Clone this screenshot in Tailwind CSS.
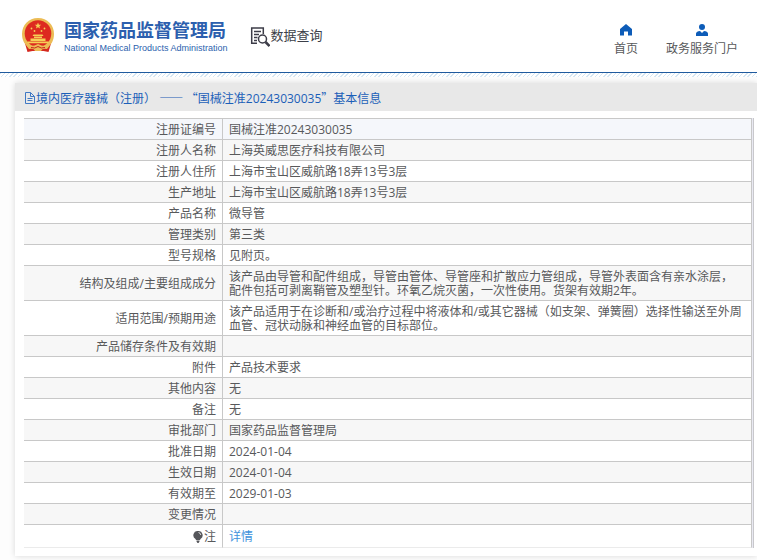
<!DOCTYPE html>
<html lang="zh-CN">
<head>
<meta charset="utf-8">
<title>国家药品监督管理局 数据查询</title>
<script src="https://cdn.jsdelivr.net/npm/@tailwindcss/browser@4"></script>
</head>
<body class="min-h-screen bg-[#fdfdfd] font-['Open_Sans','Noto_Sans_CJK_SC',sans-serif] text-xs text-[#58595b]">
<header class="flex items-start justify-between border-b border-[#1f5a9e] bg-white pt-4 pr-[19px] pb-[15px] pl-5">
  <div class="flex items-center">
    <a href="#" class="flex items-center gap-2" aria-label="国家药品监督管理局">
      <svg class="h-10 w-9" viewBox="0 0 36 40" aria-hidden="true">
        <path d="M4 24L7.500 36l5-1h11l5 1L32 24z" fill="#d5281f"/>
        <path d="M18 2C8.500 2 2 9 2 18c0 6 2.500 10 6 13h20c3.500-3 6-7 6-13C34 9 27.500 2 18 2z" fill="#ecbc55"/>
        <circle cx="18" cy="17.500" r="13.300" fill="#dd2a20"/>
        <path d="M18 6.500l.9 2.200 2.300.1-1.800 1.500.6 2.300-2-1.300-2 1.300.6-2.300-1.800-1.500 2.300-.1z" fill="#f6cf56"/>
        <g fill="#f6cf56"><circle cx="11.500" cy="12.500" r=".9"/><circle cx="14.500" cy="15" r=".9"/><circle cx="21.500" cy="15" r=".9"/><circle cx="24.500" cy="12.500" r=".9"/>
        <path d="M13.500 18.500h9l1 1.500h-11zM14 20.500h8V22h-8zM10.500 22.500h15V25h-15zM7.500 25.500h21v1.700h-21z"/></g>
        <path d="M6 29q6 2.500 12-1 6 3.500 12 1l-3 4q-5-1-6 2h-6q-1-3-6-2z" fill="#ecbc55"/>
        <path d="M11 31.500q4 1.500 7-1 3 2.500 7 1" fill="none" stroke="#c9251c"/>
      </svg>
      <span class="flex flex-col text-[#2c5fae]">
        <span class="text-[18px] leading-6 font-bold whitespace-nowrap">国家药品监督管理局</span>
        <span class="font-['Liberation_Sans'] text-[9px] leading-3 font-normal whitespace-nowrap">National Medical Products Administration</span>
      </span>
    </a>
    <h1 class="ml-[22px] flex items-center gap-px pb-[2px] text-[13px] leading-5 font-normal whitespace-nowrap text-[#3c3f48]">
      <svg class="mt-1 h-5 w-5" viewBox="0 0 20 20" fill="none" stroke="#3c3c48" stroke-width="1.500" aria-hidden="true">
        <path d="M7 16.300H1.700V.9h11.600v6M4 4.500h7M4 7.500h5M4 10.500h3.500M4 13.500h3"/>
        <circle cx="12.500" cy="12" r="4"/><path d="M15.500 15l4 4" stroke-width="2.500"/>
      </svg>数据查询
    </h1>
  </div>
  <nav class="flex gap-7 pt-2 leading-4 whitespace-nowrap">
    <a href="#" class="flex flex-col items-center gap-[5px]">
      <svg class="h-3 w-3" viewBox="0 0 12 12" fill="#0d5cb8" aria-hidden="true"><path d="M6 0l6 5v6.500H8V7.500H4v4H0V5z"/></svg>首页
    </a>
    <a href="#" class="flex flex-col items-center gap-[5px]">
      <svg class="h-3 w-3" viewBox="0 0 12 12" fill="#0d5cb8" aria-hidden="true"><circle cx="6" cy="3" r="3"/><path d="M0 12V9.500Q.5 7 4 7l2 2 2-2q3.500 0 4 2.500V12z"/></svg>政务服务门户
    </a>
  </nav>
</header>
<div class="h-1 bg-[repeating-linear-gradient(135deg,#d6e6f2_0_1px,#fff_1px_3px)]"></div>
<main class="pt-[6px] pl-[15px] pb-1">
  <section class="bg-white pb-2 shadow-[0_0_6px_rgba(0,0,0,0.15)]">
    <h2 class="flex h-7 items-center bg-[#e8e8e8] pt-[2px] pl-[9px] whitespace-nowrap text-[#1b5fb8]">
      <svg class="h-3 w-3" viewBox="0 0 12 12" fill="none" stroke="#3f78c4" aria-hidden="true"><path d="M1.500.5h5l4 4v7h-9zM6.500.5v4h4M3.500 6.500h5M3.500 8.500h5"/></svg>
      <span>境内医疗器械（注册） <span class="font-['Noto_Sans_CJK_SC']">—— “</span>国械注准20243030035<span class="font-['Noto_Sans_CJK_SC']">”</span>基本信息</span>
    </h2>
    <div class="pt-[7px] pr-[3px] pl-[9px]">
      <div class="border-r border-[#c8c8cc] bg-[#e9e9f2] pr-px">
        <table class="w-full border-separate border-spacing-0 border-t border-[#c8c8c8] bg-white leading-[14px] [&_td]:border-r [&_td]:border-b [&_td]:border-[#c8c8c8] [&_td]:pt-1 [&_td]:pr-2 [&_td]:pb-[2px] [&_td]:pl-[6px] [&_th]:w-[199px] [&_th]:border-r [&_th]:border-b [&_th]:border-[#c8c8c8] [&_th]:px-[6px] [&_th]:pt-1 [&_th]:pb-[2px] [&_th]:text-right [&_th]:font-normal [&_tr]:h-[21px] [&_tr:nth-child(even)]:bg-[#f7f7f7]">
          <tbody>
            <tr class="bg-[#f5f7fb]"><th scope="row">注册证编号</th><td>国械注准20243030035</td></tr>
            <tr><th scope="row">注册人名称</th><td>上海英威思医疗科技有限公司</td></tr>
            <tr><th scope="row">注册人住所</th><td>上海市宝山区威航路18弄13号3层</td></tr>
            <tr><th scope="row">生产地址</th><td>上海市宝山区威航路18弄13号3层</td></tr>
            <tr><th scope="row">产品名称</th><td>微导管</td></tr>
            <tr><th scope="row">管理类别</th><td>第三类</td></tr>
            <tr><th scope="row">型号规格</th><td>见附页。</td></tr>
            <tr><th scope="row">结构及组成/主要组成成分</th><td>该产品由导管和配件组成，导管由管体、导管座和扩散应力管组成，导管外表面含有亲水涂层，配件包括可剥离鞘管及塑型针。环氧乙烷灭菌，一次性使用。货架有效期2年。</td></tr>
            <tr><th scope="row">适用范围/预期用途</th><td>该产品适用于在诊断和/或治疗过程中将液体和/或其它器械（如支架、弹簧圈）选择性输送至外周血管、冠状动脉和神经血管的目标部位。</td></tr>
            <tr><th scope="row">产品储存条件及有效期</th><td></td></tr>
            <tr><th scope="row">附件</th><td>产品技术要求</td></tr>
            <tr><th scope="row">其他内容</th><td>无</td></tr>
            <tr><th scope="row">备注</th><td>无</td></tr>
            <tr><th scope="row">审批部门</th><td>国家药品监督管理局</td></tr>
            <tr><th scope="row">批准日期</th><td>2024-01-04</td></tr>
            <tr><th scope="row">生效日期</th><td>2024-01-04</td></tr>
            <tr><th scope="row">有效期至</th><td>2029-01-03</td></tr>
            <tr><th scope="row">变更情况</th><td></td></tr>
            <tr class="leading-4 [&>*]:border-b-[#ebebeb]!"><th scope="row"><span class="flex items-center justify-end gap-px"><svg class="h-3 w-[10px]" viewBox="0 0 10 12" fill="#55565a" aria-hidden="true"><path d="M5 0a4.300 4.300 0 0 1 2.500 8L7 9H3l-.5-1A4.300 4.300 0 0 1 5 0zM3.500 9.500h3v1L5.500 12h-1l-1-1.500z"/><path d="M5.500 1.500q2 .3 2.300 2.500" fill="none" stroke="#fff" stroke-width=".8"/></svg>注</span></th><td><a href="#" class="text-[#3f92dc]">详情</a></td></tr>
          </tbody>
        </table>
      </div>
    </div>
  </section>
</main>
</body>
</html>
